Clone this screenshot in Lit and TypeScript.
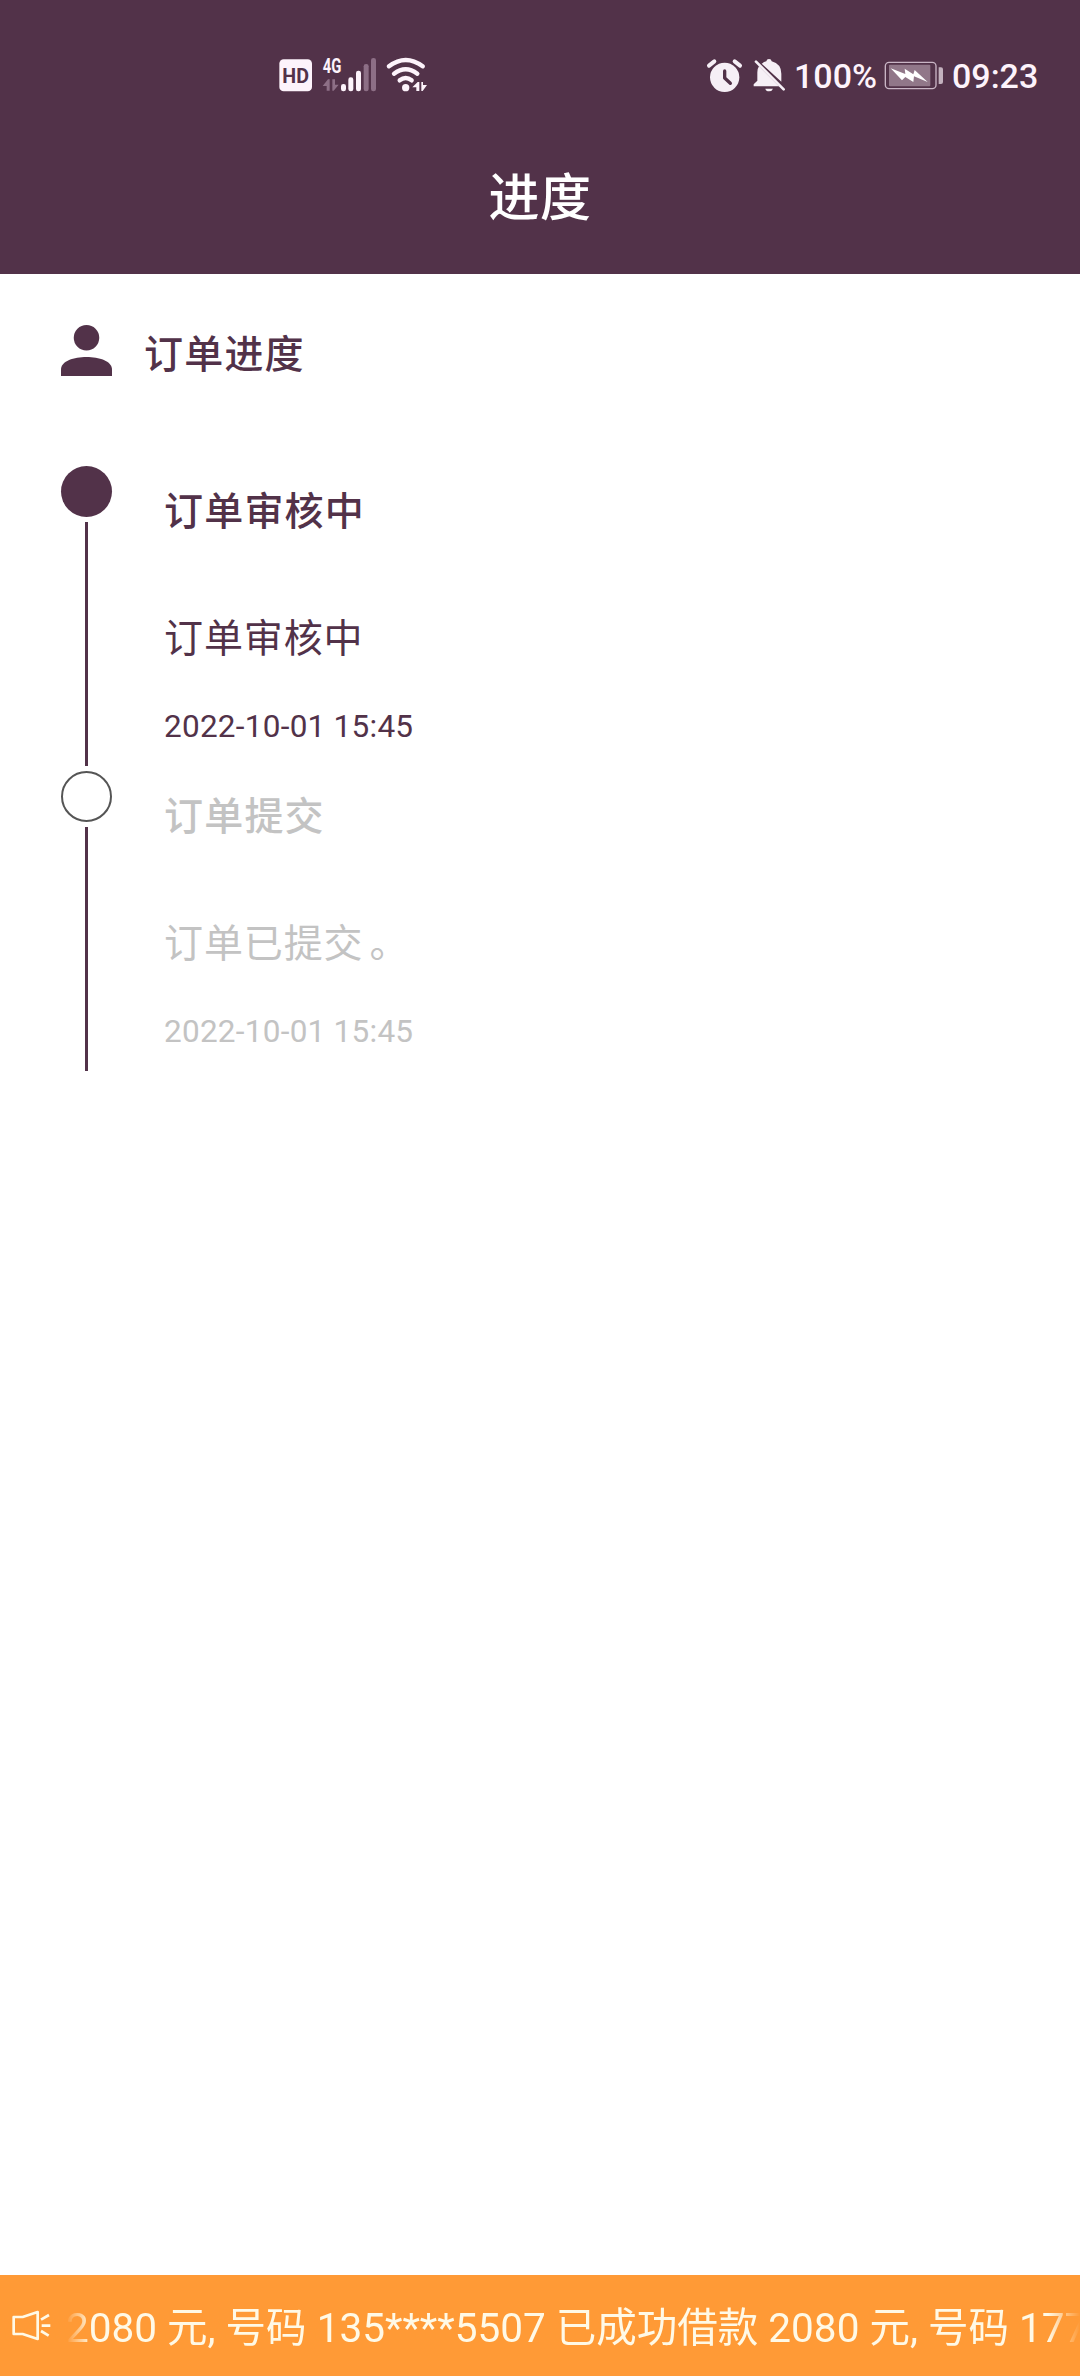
import { LitElement, html, css, svg, nothing } from "lit";
import { customElement, property } from "lit/decorators.js";

interface Step {
  title: string;
  detail: string;
  stop?: string;
  time: string;
  active: boolean;
}

const STEPS: Step[] = [
  { title: "订单审核中", detail: "订单审核中", time: "2022-10-01 15:45", active: true },
  { title: "订单提交", detail: "订单已提交", stop: "。", time: "2022-10-01 15:45", active: false },
];

@customElement("status-bar")
export class StatusBar extends LitElement {
  static styles = css`
    :host {
      display: flex;
      justify-content: space-between;
      align-items: center;
      height: 40px;
      padding: 55px 42px 0 278px;
      color: #fdf3fb;
      font: 500 34px/40px Roboto, "Noto Sans", sans-serif;
    }
    .group {
      display: flex;
      align-items: center;
    }
    .network {
      gap: 8px;
    }
    svg {
      display: block;
      flex: none;
    }
    .bell {
      margin-left: 10px;
    }
    .percent {
      width: 98px;
      box-sizing: border-box;
      padding-left: 8px;
      padding-top: 2px;
    }
    .clock {
      width: 94px;
      box-sizing: border-box;
      padding-left: 8px;
      padding-top: 2px;
    }
  `;

  render() {
    return html`
      <div class="group network">
        <svg width="36" height="40" viewBox="54 45 108 120">
          <rect x="58" y="58" width="98" height="96" rx="13" fill="#fdf3fb" />
          <text x="107" y="128" text-anchor="middle" textLength="80" lengthAdjust="spacingAndGlyphs"
            font-family="Roboto, sans-serif" font-weight="700" font-size="60" fill="#523249">HD</text>
        </svg>
        <svg width="56" height="40" viewBox="186 45 168 120">
          <text x="188" y="98" textLength="56" lengthAdjust="spacingAndGlyphs"
            font-family="Roboto, sans-serif" font-weight="700" font-size="60" fill="#fdf3fb">4G</text>
          <g fill="#8d6f86">
            <path d="M188 138L204 118H209V152H200V138Z" />
            <path d="M217 118H225V134H236L221 152H217Z" />
            <rect x="311" y="72" width="15" height="82" rx="7" />
            <rect x="333" y="54" width="15" height="100" rx="7" />
          </g>
          <g fill="#fdf3fb">
            <rect x="243" y="132" width="15" height="22" rx="7" />
            <rect x="265" y="112" width="15" height="42" rx="7" />
            <rect x="288" y="92" width="15" height="62" rx="7" />
          </g>
        </svg>
        <svg width="44" height="40" viewBox="378 45 132 120">
          <g fill="none" stroke="#fdf3fb" stroke-width="13" stroke-linecap="round">
            <path d="M387 79Q437 41 488 79" />
            <path d="M402 101Q437 74 472 101" />
            <path d="M419 121Q437 107 455 121" />
          </g>
          <circle cx="437" cy="143" r="11" fill="#fdf3fb" />
          <path d="M457 142L473 126H478V153H469V142Z" fill="#fdf3fb" />
          <path d="M484 126H489V135H501L488 153H484Z" fill="#fdf3fb" />
        </svg>
      </div>
      <div class="group">
        <svg width="37" height="40" viewBox="48 45 111 120">
          <g stroke="#f6eff6" stroke-width="12" stroke-linecap="round">
            <path d="M57 77L73 64M150 77L134 64" />
          </g>
          <circle cx="104" cy="112" r="44" fill="#f6eff6" />
          <path d="M104 93V114L121 130" fill="none" stroke="#523249" stroke-width="10" stroke-linecap="round" stroke-linejoin="round" />
        </svg>
        <svg class="bell" width="33" height="40" viewBox="189 45 99 120">
          <path d="M191 139V133L202 122V97Q202 86 207 79L267 139Z" fill="#f6eff6" />
          <path d="M215 71Q221 66 229 64Q230 57 237 57T245 64Q274 72 274 101V125Z" fill="#f6eff6" />
          <path d="M226 146H249Q246 154 237 154T226 146Z" fill="#f6eff6" />
          <path d="M198 65L281 148" stroke="#f6eff6" stroke-width="8" stroke-linecap="round" />
        </svg>
        <span class="percent">100%</span>
        <svg width="60" height="40" viewBox="582 45 180 120">
          <rect x="586" y="67" width="152" height="79" rx="11" fill="none" stroke="#c9b5c5" stroke-width="4" />
          <rect x="597" y="74" width="124" height="65" rx="3" fill="#917789" />
          <path d="M602 85L646 102L644 86L670 103L674 90L713 126L672 109L670 126L646 111L636 121Z" fill="#fff" />
          <path d="M746 82H753Q759 82 759 88V126Q759 132 753 132H746Z" fill="#c3b1be" />
        </svg>
        <span class="clock">09:23</span>
      </div>
    `;
  }
}

@customElement("timeline-step")
export class TimelineStep extends LitElement {
  @property({ attribute: false }) step!: Step;

  static styles = css`
    :host {
      display: block;
    }
    .step {
      display: flex;
      height: 305px;
      gap: 52px;
      color: #523249;
    }
    .muted .body {
      color: #c3c3c3;
    }
    .rail {
      display: flex;
      flex-direction: column;
      align-items: center;
      width: 51px;
    }
    .dot {
      box-sizing: border-box;
      width: 51px;
      height: 51px;
      border-radius: 50%;
      background: #523249;
      margin-bottom: 5px;
      flex: none;
    }
    .muted .dot {
      background: #fff;
      border: 2.5px solid #555;
    }
    .line {
      width: 3px;
      height: 244px;
      background: #523249;
    }
    .body {
      display: flex;
      flex-direction: column;
      padding-top: 16px;
    }
    .title,
    .detail {
      font-size: 39px;
      line-height: 60px;
      letter-spacing: 0.9px;
    }
    .title {
      font-weight: 500;
      letter-spacing: 1.2px;
    }
    .detail {
      margin-top: 67px;
    }
    .stop {
      margin-left: 6px;
    }
    .time {
      margin-top: 38px;
      font-size: 31.5px;
      line-height: 40px;
      letter-spacing: 0.25px;
    }
  `;

  render() {
    const s = this.step;
    if (!s) return nothing;
    return html`
      <div class="step ${s.active ? "" : "muted"}">
        <div class="rail">
          <div class="dot"></div>
          <div class="line"></div>
        </div>
        <div class="body">
          <div class="title">${s.title}</div>
          <div class="detail">${s.detail}${s.stop ? html`<span class="stop">${s.stop}</span>` : nothing}</div>
          <div class="time">${s.time}</div>
        </div>
      </div>
    `;
  }
}

@customElement("app-root")
export class AppRoot extends LitElement {
  static styles = css`
    :host {
      display: flex;
      flex-direction: column;
      height: 2376px;
      background: #fff;
      font-family: Roboto, "Noto Sans CJK SC", sans-serif;
      overflow: hidden;
    }
    .header {
      height: 274px;
      background: #523249;
      flex: none;
    }
    .page-title {
      margin: 0;
      padding-top: 64px;
      text-align: center;
      color: #fff;
      font-weight: 500;
      font-size: 51px;
      line-height: 80px;
      letter-spacing: 0.5px;
    }
    .content {
      flex: 1;
      padding: 0 61px;
    }
    .section {
      display: flex;
      align-items: flex-start;
      gap: 32px;
      height: 58px;
      padding-top: 51px;
      color: #523249;
      font-size: 39px;
      font-weight: 500;
      line-height: 60px;
      letter-spacing: 1.2px;
    }
    .section svg {
      display: block;
    }
    .timeline {
      margin-top: 83px;
    }
    .notice {
      display: flex;
      align-items: center;
      height: 101px;
      flex: none;
      background: #ff9a36;
      color: #fff9e6;
      padding-left: 12px;
    }
    .notice svg {
      flex: none;
      display: block;
    }
    .ticker {
      flex: 1;
      min-width: 0;
      margin-left: 15px;
      padding-top: 5px;
      overflow: hidden;
      white-space: nowrap;
      font-size: 40.5px;
      line-height: 60px;
      mask-image: linear-gradient(to right, transparent, #000 26px, #000 calc(100% - 32px), transparent);
    }
  `;

  render() {
    return html`
      <header class="header">
        <status-bar></status-bar>
        <h1 class="page-title">进度</h1>
      </header>
      <main class="content">
        <div class="section">
          <svg width="51" height="51" viewBox="0 0 51 51" fill="currentColor">
            ${svg`<circle cx="25.5" cy="12.75" r="12.75" /><path d="M0 51V44.5C0 36 13 32 25.5 32S51 36 51 44.5V51Z" />`}
          </svg>
          <span>订单进度</span>
        </div>
        <div class="timeline">
          ${STEPS.map((s) => html`<timeline-step .step=${s}></timeline-step>`)}
        </div>
      </main>
      <footer class="notice">
        <svg width="39" height="35" viewBox="36 145 117 105" fill="none" stroke="currentColor" stroke-width="8">
          <path d="M41 172H68L113 157V238L68 223H41Z" stroke-linejoin="round" />
          <path d="M123 180L147 166M125 198H151M123 214L146 228" />
        </svg>
        <div class="ticker">2080 元, 号码 135****5507 已成功借款 2080 元, 号码 177</div>
      </footer>
    `;
  }
}
